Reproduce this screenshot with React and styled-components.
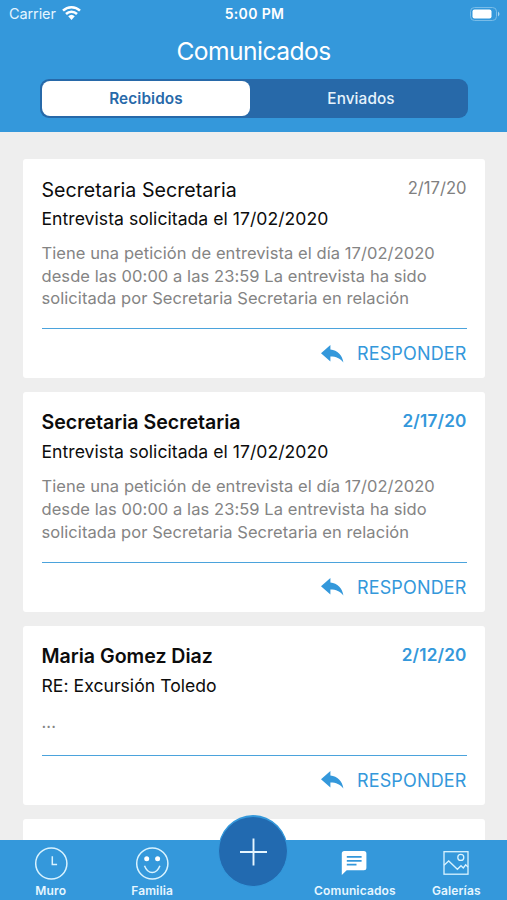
import React, { useState } from "react";
import styled, { createGlobalStyle } from "styled-components";

const blue = "#3498db";
const darkBlue = "#2769a9";

const GlobalStyle = createGlobalStyle`
  * {
    box-sizing: border-box;
  }
  body {
    margin: 0;
    background: #eeeeee;
    font-family: Inter, "Liberation Sans", sans-serif;
  }
  button {
    font-family: inherit;
    border: 0;
    padding: 0;
    background: none;
    cursor: pointer;
  }
`;

const Screen = styled.div`
  display: flex;
  flex-direction: column;
  width: 507px;
  height: 900px;
  overflow: hidden;
  background: #eeeeee;
`;

const Header = styled.header`
  flex: none;
  height: 131.5px;
  background: ${blue};
  color: #fff;
`;

const StatusBar = styled.div`
  display: grid;
  grid-template-columns: 1fr auto 1fr;
  align-items: center;
  height: 27px;
  padding: 0 7px 0 9px;
`;

const Carrier = styled.div`
  display: flex;
  align-items: center;
  gap: 6px;
  font-size: 14.5px;
  letter-spacing: -0.1px;
  color: #e4f5ff;
`;

const Clock = styled.div`
  font-size: 14px;
  font-weight: 600;
  letter-spacing: 0.35px;
`;

const Battery = styled.svg`
  justify-self: end;
`;

const Title = styled.h1`
  margin: 0;
  height: 48px;
  line-height: 48px;
  text-align: center;
  font-size: 24.6px;
  font-weight: 400;
  letter-spacing: -0.55px;
`;

const Segmented = styled.div`
  display: flex;
  width: 428px;
  height: 39px;
  margin: 4px 0 0 40px;
  padding: 2px;
  border-radius: 9px;
  background: ${darkBlue};
`;

const Segment = styled.button`
  flex: ${props => (props.$active ? "0 0 208px" : "1")};
  padding: ${props => (props.$active ? "0" : "0 0 0 6px")};
  border-radius: 8px;
  background: ${props => (props.$active ? "#fff" : "transparent")};
  color: ${props => (props.$active ? darkBlue : "#e6f3fc")};
  font-size: 15.3px;
  font-weight: ${props => (props.$active ? 600 : 500)};
  letter-spacing: 0.12px;
`;

const MessageList = styled.main`
  flex: 1;
  min-height: 0;
  overflow: hidden;
  display: flex;
  flex-direction: column;
  gap: 13.8px;
  padding: 27px 22px 0 23px;
`;

const Card = styled.article`
  flex: none;
  padding: 18.4px 18.5px 0;
  min-height: 100px;
  border-radius: 3px;
  background: #fff;
`;

const CardTop = styled.div`
  display: flex;
  justify-content: space-between;
  height: 26px;
  line-height: 26px;
`;

const Sender = styled.div`
  margin-top: ${props => (props.$unread ? "-1px" : "0")};
  font-size: 19.6px;
  font-weight: ${props => (props.$unread ? 600 : 400)};
  letter-spacing: ${props => (props.$unread ? "-0.02px" : "0.03px")};
  color: #0c0c0c;
`;

const SentAt = styled.div`
  margin-top: -2px;
  font-size: ${props => (props.$unread ? "17.2px" : "16.6px")};
  font-weight: ${props => (props.$unread ? 600 : 400)};
  letter-spacing: ${props => (props.$unread ? "0.15px" : "0")};
  color: ${props => (props.$unread ? blue : "#808080")};
`;

const Subject = styled.div`
  height: 32px;
  line-height: 32px;
  font-size: 17.6px;
  letter-spacing: 0.03px;
  color: #0c0c0c;
`;

const Excerpt = styled.p`
  margin: ${props => (props.$short ? "4px 0 21px" : "7px 0 18px")};
  padding-top: ${props => (props.$short ? "5px" : "0")};
  line-height: 22.8px;
  font-size: 16.5px;
  letter-spacing: 0.07px;
  color: #848484;
  white-space: pre-line;
`;

const CardFooter = styled.div`
  display: flex;
  justify-content: flex-end;
  height: 50px;
  border-top: 1.5px solid #4ba3dc;
`;

const ReplyButton = styled.button`
  display: flex;
  align-items: center;
  gap: 13px;
  height: 49px;
  color: ${blue};
  font-size: 18px;
  letter-spacing: 0.15px;
`;

const TabBar = styled.nav`
  flex: none;
  display: grid;
  grid-template-columns: repeat(5, 1fr);
  height: 60px;
  background: ${blue};
`;

const Tab = styled.button`
  display: flex;
  flex-direction: column;
  align-items: center;
  padding-top: 5px;
  color: #e6f6ff;
  font-size: 12px;
  font-weight: 600;
  letter-spacing: 0.14px;
  svg {
    flex: none;
  }
`;

const TabLabel = styled.span`
  margin-top: 2px;
  line-height: 16px;
`;

const AddButton = styled.button`
  display: grid;
  place-items: center;
  align-self: start;
  justify-self: center;
  width: 70px;
  height: 72px;
  margin-top: -25px;
  border-radius: 50%;
  border: 1px solid ${blue};
  border-top-width: 2px;
  background: #226ab0;
  position: relative;
`;

const WifiIcon = () => (
  <svg width="19" height="15" viewBox="0 0 19 15" fill="none" stroke="#fff" strokeWidth="2.5">
    <path d="M1 4.7a12.2 12.2 0 0 1 17 0" />
    <path d="M4 8a8 8 0 0 1 11 0" />
    <path d="M6.2 10.3a4.8 4.8 0 0 1 6.6 0L9.5 14z" fill="#fff" stroke="none" />
  </svg>
);

const BatteryIcon = () => (
  <Battery width="30" height="14" viewBox="0 0 30 14">
    <rect x="0.5" y="0.5" width="26" height="13" rx="4" fill="none" stroke="#79bce8" />
    <rect x="2.5" y="2.5" width="19" height="9" rx="2" fill="#fff" />
    <path d="M28 4.5q3 2.5 0 5z" fill="#a6d5f2" />
  </Battery>
);

const ReplyIcon = () => (
  <svg width="23" height="18" viewBox="0 0 23 18" fill={blue}>
    <path d="M0 8.3 9.4 0v4.6c7.1.9 11.8 5.2 13 13C19 13.2 15.2 11.5 9.4 11.5v5z" />
  </svg>
);

const ClockIcon = () => (
  <svg width="36" height="36" viewBox="0 0 36 36" fill="none" stroke="#d9f3ff" strokeWidth="1.5">
    <circle cx="18.3" cy="18.5" r="15.6" />
    <path d="M19.3 11.3v8.1h4.8" />
  </svg>
);

const SmileIcon = () => (
  <svg width="36" height="36" viewBox="0 0 36 36" fill="none" stroke="#d9f3ff" strokeWidth="1.5">
    <circle cx="18.3" cy="18.5" r="15.6" />
    <circle cx="12.7" cy="13.7" r="2.5" fill="#fff" stroke="none" />
    <circle cx="23.6" cy="13.7" r="2.5" fill="#fff" stroke="none" />
    <path d="M10.5 20.8c1.8 4.7 4.7 6.8 7.7 6.8s5.9-2.1 7.7-6.8" />
  </svg>
);

const ChatIcon = () => (
  <svg width="36" height="36" viewBox="0 0 36 36">
    <path d="M7.3 6h19.6a2.5 2.5 0 0 1 2.5 2.5v14.2a2.5 2.5 0 0 1-2.5 2.5H9.7L4.8 30V8.5A2.5 2.5 0 0 1 7.3 6z" fill="#fff" />
    <path d="M9.8 11.9h14.8M9.8 15.8h14.8M9.8 19.6h9.7" stroke={blue} strokeWidth="1.8" />
  </svg>
);

const GalleryIcon = () => (
  <svg width="36" height="36" viewBox="0 0 36 36" fill="none" stroke="#d9f3ff" strokeWidth="1.3">
    <rect x="6" y="6.7" width="24" height="22.5" />
    <circle cx="22.8" cy="12.4" r="3" />
    <path d="M6 20.3l4.7-4.3 8.7 8.3 3.6-3.6 2.3 2.3 2.4-3.2 2.3 2.3" />
  </svg>
);

const PlusIcon = () => (
  <svg width="28" height="28" viewBox="0 0 28 28" stroke="#e6f6ff" strokeWidth="1.9">
    <path d="M14.5 0.5v27M1 14h27" />
  </svg>
);

const interview =
  "Tiene una petición de entrevista el día 17/02/2020\ndesde las 00:00 a las 23:59 La entrevista ha sido\nsolicitada por Secretaria Secretaria en relación";

const messages = [
  {
    sender: "Secretaria Secretaria",
    date: "2/17/20",
    subject: "Entrevista solicitada el 17/02/2020",
    excerpt: interview,
    unread: false
  },
  {
    sender: "Secretaria Secretaria",
    date: "2/17/20",
    subject: "Entrevista solicitada el 17/02/2020",
    excerpt: interview,
    unread: true
  },
  {
    sender: "Maria Gomez Diaz",
    date: "2/12/20",
    subject: "RE: Excursión Toledo",
    excerpt: "...",
    unread: true
  }
];

const Message = ({ sender, date, subject, excerpt, unread }) => (
  <Card>
    <CardTop>
      <Sender $unread={unread}>{sender}</Sender>
      <SentAt $unread={unread}>{date}</SentAt>
    </CardTop>
    <Subject>{subject}</Subject>
    <Excerpt $short={excerpt === "..."}>{excerpt}</Excerpt>
    <CardFooter>
      <ReplyButton>
        <ReplyIcon />
        RESPONDER
      </ReplyButton>
    </CardFooter>
  </Card>
);

const App = () => {
  const [box, setBox] = useState("Recibidos");

  return (
    <Screen>
      <GlobalStyle />
      <Header>
        <StatusBar>
          <Carrier>
            Carrier
            <WifiIcon />
          </Carrier>
          <Clock>5:00 PM</Clock>
          <BatteryIcon />
        </StatusBar>
        <Title>Comunicados</Title>
        <Segmented>
          {["Recibidos", "Enviados"].map(name => (
            <Segment key={name} $active={box === name} onClick={() => setBox(name)}>
              {name}
            </Segment>
          ))}
        </Segmented>
      </Header>
      <MessageList>
        {messages.map((message, i) => (
          <Message key={i} {...message} />
        ))}
        <Card />
      </MessageList>
      <TabBar>
        <Tab>
          <ClockIcon />
          <TabLabel>Muro</TabLabel>
        </Tab>
        <Tab>
          <SmileIcon />
          <TabLabel>Familia</TabLabel>
        </Tab>
        <AddButton>
          <PlusIcon />
        </AddButton>
        <Tab>
          <ChatIcon />
          <TabLabel>Comunicados</TabLabel>
        </Tab>
        <Tab>
          <GalleryIcon />
          <TabLabel>Galerías</TabLabel>
        </Tab>
      </TabBar>
    </Screen>
  );
};

export default App;
